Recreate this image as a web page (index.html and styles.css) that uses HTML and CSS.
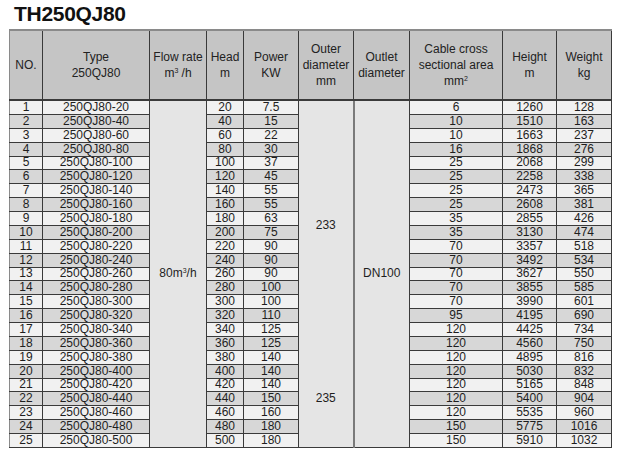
FILE: index.html
```html
<!DOCTYPE html>
<html>
<head>
<meta charset="utf-8">
<link rel="stylesheet" href="styles.css">
</head>
<body>
<div class="title">TH250QJ80</div>
<table class="spec">
<colgroup>
<col class="c-no"><col class="c-type"><col class="c-flow"><col class="c-head"><col class="c-power"><col class="c-outer"><col class="c-outlet"><col class="c-cable"><col class="c-height"><col class="c-weight">
</colgroup>
<thead>
<tr>
<th>NO.</th>
<th>Type<br>250QJ80</th>
<th>Flow rate<br>m<sup>3</sup> /h</th>
<th>Head<br>m</th>
<th>Power<br>KW</th>
<th>Outer<br>diameter<br>mm</th>
<th>Outlet<br>diameter</th>
<th>Cable cross<br>sectional area<br>mm<sup>2</sup></th>
<th>Height<br>m</th>
<th>Weight<br>kg</th>
</tr>
</thead>
<tbody>
<tr class="odd"><td>1</td><td>250QJ80-20</td><td class="merge" rowspan="25">80m<sup>3</sup>/h</td><td>20</td><td>7.5</td><td class="merge outer-a" rowspan="18">233</td><td class="merge outlet" rowspan="25">DN100</td><td>6</td><td>1260</td><td>128</td></tr>
<tr class="even"><td>2</td><td>250QJ80-40</td><td>40</td><td>15</td><td>10</td><td>1510</td><td>163</td></tr>
<tr class="odd"><td>3</td><td>250QJ80-60</td><td>60</td><td>22</td><td>10</td><td>1663</td><td>237</td></tr>
<tr class="even"><td>4</td><td>250QJ80-80</td><td>80</td><td>30</td><td>16</td><td>1868</td><td>276</td></tr>
<tr class="odd"><td>5</td><td>250QJ80-100</td><td>100</td><td>37</td><td>25</td><td>2068</td><td>299</td></tr>
<tr class="even"><td>6</td><td>250QJ80-120</td><td>120</td><td>45</td><td>25</td><td>2258</td><td>338</td></tr>
<tr class="odd"><td>7</td><td>250QJ80-140</td><td>140</td><td>55</td><td>25</td><td>2473</td><td>365</td></tr>
<tr class="even"><td>8</td><td>250QJ80-160</td><td>160</td><td>55</td><td>25</td><td>2608</td><td>381</td></tr>
<tr class="odd"><td>9</td><td>250QJ80-180</td><td>180</td><td>63</td><td>35</td><td>2855</td><td>426</td></tr>
<tr class="even"><td>10</td><td>250QJ80-200</td><td>200</td><td>75</td><td>35</td><td>3130</td><td>474</td></tr>
<tr class="odd"><td>11</td><td>250QJ80-220</td><td>220</td><td>90</td><td>70</td><td>3357</td><td>518</td></tr>
<tr class="even"><td>12</td><td>250QJ80-240</td><td>240</td><td>90</td><td>70</td><td>3492</td><td>534</td></tr>
<tr class="odd"><td>13</td><td>250QJ80-260</td><td>260</td><td>90</td><td>70</td><td>3627</td><td>550</td></tr>
<tr class="even"><td>14</td><td>250QJ80-280</td><td>280</td><td>100</td><td>70</td><td>3855</td><td>585</td></tr>
<tr class="odd"><td>15</td><td>250QJ80-300</td><td>300</td><td>100</td><td>70</td><td>3990</td><td>601</td></tr>
<tr class="even"><td>16</td><td>250QJ80-320</td><td>320</td><td>110</td><td>95</td><td>4195</td><td>690</td></tr>
<tr class="odd"><td>17</td><td>250QJ80-340</td><td>340</td><td>125</td><td>120</td><td>4425</td><td>734</td></tr>
<tr class="even"><td>18</td><td>250QJ80-360</td><td>360</td><td>125</td><td>120</td><td>4560</td><td>750</td></tr>
<tr class="odd"><td>19</td><td>250QJ80-380</td><td>380</td><td>140</td><td class="merge outer-b" rowspan="7">235</td><td>120</td><td>4895</td><td>816</td></tr>
<tr class="even"><td>20</td><td>250QJ80-400</td><td>400</td><td>140</td><td>120</td><td>5030</td><td>832</td></tr>
<tr class="odd"><td>21</td><td>250QJ80-420</td><td>420</td><td>140</td><td>120</td><td>5165</td><td>848</td></tr>
<tr class="even"><td>22</td><td>250QJ80-440</td><td>440</td><td>150</td><td>120</td><td>5400</td><td>904</td></tr>
<tr class="odd"><td>23</td><td>250QJ80-460</td><td>460</td><td>160</td><td>120</td><td>5535</td><td>960</td></tr>
<tr class="even"><td>24</td><td>250QJ80-480</td><td>480</td><td>180</td><td>150</td><td>5775</td><td>1016</td></tr>
<tr class="odd"><td>25</td><td>250QJ80-500</td><td>500</td><td>180</td><td>150</td><td>5910</td><td>1032</td></tr>
</tbody>
</table>
</body>
</html>
```
FILE: styles.css
```css
html, body {
  margin: 0;
  padding: 0;
  background: #ffffff;
}
body {
  font-family: "Liberation Sans", Arial, sans-serif;
  color: #1e1e1e;
}
.title {
  font-weight: bold;
  font-size: 21px;
  line-height: 24px;
  height: 29px;
  padding-left: 14px;
  padding-top: 2px;
  box-sizing: border-box;
  color: #111;
  letter-spacing: -0.3px;
}
.spec {
  margin-left: 9px;
  border-collapse: collapse;
  table-layout: fixed;
  width: 603px;
  font-size: 12px;
}
.c-no { width: 33px; }
.c-type { width: 107px; }
.c-flow { width: 57px; }
.c-head { width: 37px; }
.c-power { width: 55px; }
.c-outer { width: 55px; }
.c-outlet { width: 56px; }
.c-cable { width: 93px; }
.c-height { width: 54px; }
.c-weight { width: 55px; }
.spec th {
  background: #c5c5c5;
  font-weight: normal;
  height: 68px;
  line-height: 16px;
  padding: 0;
  text-align: center;
  vertical-align: middle;
  border-left: 1px solid #3a3a3a;
  border-right: 1px solid #3a3a3a;
  border-top: 2px solid #8a8a8a;
  border-bottom: 2px solid #3a3a3a;
  color: #222;
}
.spec th:first-child {
  border-left: 1px solid #8a8a8a;
}
.spec td {
  height: 12.88px;
  line-height: 11px;
  padding: 0;
  text-align: center;
  border: 1px solid #3a3a3a;
  white-space: nowrap;
  overflow: hidden;
}
.spec td:first-child {
  border-left: 1px solid #8a8a8a;
}
.odd td { background: #f1f1f1; }
.even td { background: #d7d7d7; }
.spec td.merge {
  background: #e5e5e5;
  vertical-align: middle;
}
.spec td.outer-a {
  border-bottom: none;
  vertical-align: middle;
}
.spec td.outer-b {
  border-top: none;
}
.spec td.outlet {
  border-left: 2px solid #7a7a7a;
}
sup {
  font-size: 7px;
  line-height: 0;
  vertical-align: 4px;
}
```
